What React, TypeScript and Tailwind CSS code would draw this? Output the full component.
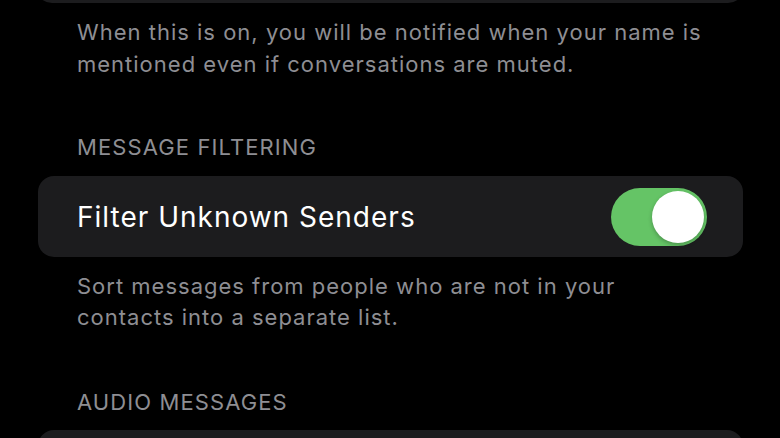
const font = { fontFamily: "Inter, 'Noto Sans', sans-serif" };

const Toggle = () => (
  <div className="w-[96px] h-[58px] rounded-full bg-[#65c466] flex items-center justify-end p-[3px] shrink-0">
    <div className="w-[52px] h-[52px] rounded-full bg-white shadow-[0_2px_4px_rgba(0,0,0,0.25)]" />
  </div>
);

const App = () => {
  return (
    <div className="w-[780px] h-[438px] bg-black overflow-hidden" style={font}>
      <div className="mx-[36px] -mt-[40px] h-[43px] rounded-[16px] bg-[#1c1c1e]" />

      <p className="mt-[13px] pl-[77px] pr-[40px] text-[22px] leading-[32px] text-[#8e8e93] tracking-[1px]">
        When this is on, you will be notified when your name is mentioned even if conversations are muted.
      </p>

      <p className="mt-[55px] px-[77px] text-[22px] leading-[24px] text-[#8e8e93] uppercase tracking-[1.1px]">
        Message Filtering
      </p>

      <div className="mt-[17px] ml-[38px] mr-[37px] h-[81px] rounded-[16px] bg-[#1c1c1e] flex items-center justify-between pl-[39px] pr-[36px]">
        <span className="text-[28px] text-white tracking-[1px]">Filter Unknown Senders</span>
        <Toggle />
      </div>

      <p className="mt-[14px] pl-[77px] pr-[150px] text-[22px] leading-[31px] text-[#8e8e93] tracking-[1px]">
        Sort messages from people who are not in your contacts into a separate list.
      </p>

      <p className="mt-[57px] px-[77px] text-[22px] leading-[24px] text-[#8e8e93] uppercase tracking-[1.1px]">
        Audio Messages
      </p>

      <div className="mt-[16px] ml-[38px] mr-[37px] h-[81px] rounded-[16px] bg-[#1c1c1e]" />
    </div>
  );
};

export default App;
